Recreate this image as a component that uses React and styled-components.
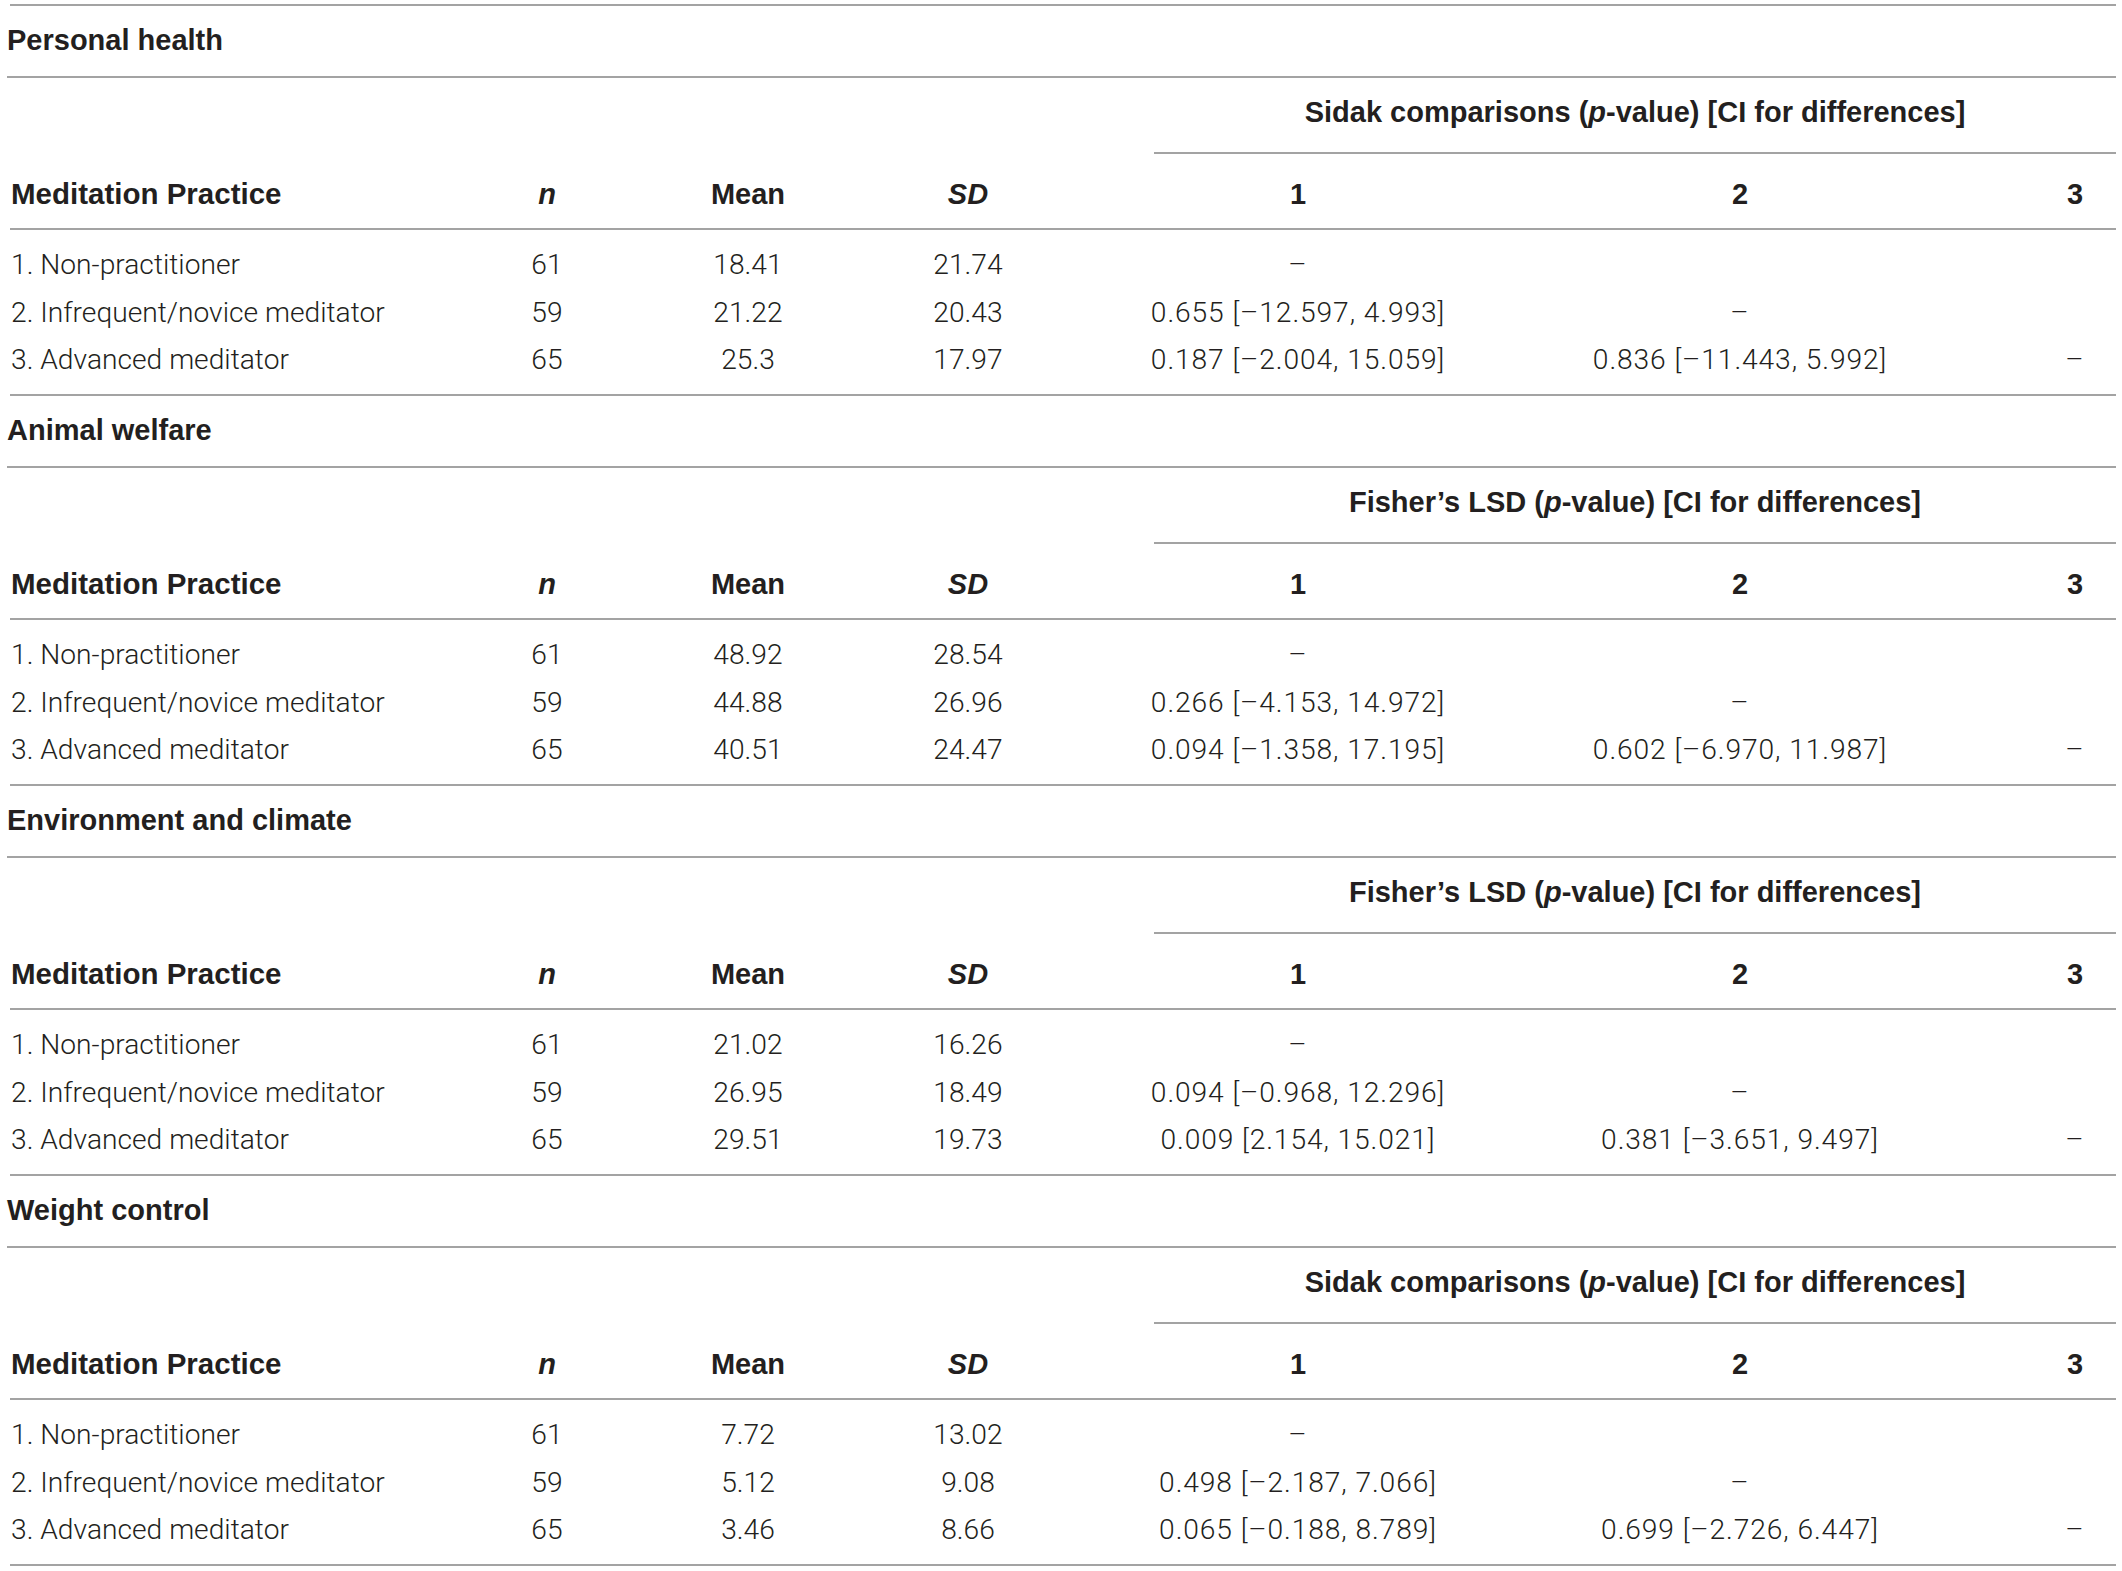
import React from 'react';
import styled, { createGlobalStyle } from 'styled-components';

const LINE = '#a3a3a3';
const INK = '#231f20';
const COLUMNS = '437px 200px 202px 238px 63px 296px 588px 82px';

const SECTIONS = [
    {
        title: 'Personal health',
        test: 'Sidak comparisons',
        rows: [
            ['1. Non-practitioner', '61', '18.41', '21.74', '–', '', ''],
            ['2. Infrequent/novice meditator', '59', '21.22', '20.43', '0.655 [–12.597, 4.993]', '–', ''],
            ['3. Advanced meditator', '65', '25.3', '17.97', '0.187 [–2.004, 15.059]', '0.836 [–11.443, 5.992]', '–'],
        ],
    },
    {
        title: 'Animal welfare',
        test: 'Fisher’s LSD',
        rows: [
            ['1. Non-practitioner', '61', '48.92', '28.54', '–', '', ''],
            ['2. Infrequent/novice meditator', '59', '44.88', '26.96', '0.266 [–4.153, 14.972]', '–', ''],
            ['3. Advanced meditator', '65', '40.51', '24.47', '0.094 [–1.358, 17.195]', '0.602 [–6.970, 11.987]', '–'],
        ],
    },
    {
        title: 'Environment and climate',
        test: 'Fisher’s LSD',
        rows: [
            ['1. Non-practitioner', '61', '21.02', '16.26', '–', '', ''],
            ['2. Infrequent/novice meditator', '59', '26.95', '18.49', '0.094 [–0.968, 12.296]', '–', ''],
            ['3. Advanced meditator', '65', '29.51', '19.73', '0.009 [2.154, 15.021]', '0.381 [–3.651, 9.497]', '–'],
        ],
    },
    {
        title: 'Weight control',
        test: 'Sidak comparisons',
        rows: [
            ['1. Non-practitioner', '61', '7.72', '13.02', '–', '', ''],
            ['2. Infrequent/novice meditator', '59', '5.12', '9.08', '0.498 [–2.187, 7.066]', '–', ''],
            ['3. Advanced meditator', '65', '3.46', '8.66', '0.065 [–0.188, 8.789]', '0.699 [–2.726, 6.447]', '–'],
        ],
    },
];

const GlobalStyle = createGlobalStyle`
    html, body {
        margin: 0;
        background: #ffffff;
    }
`;

const Page = styled.div`
    padding: 4px 0 0 10px;
    font-family: 'Roboto', 'Liberation Sans', sans-serif;
    color: ${INK};
`;

const Table = styled.div`
    width: 2106px;
    border-bottom: 2px solid ${LINE};
`;

const Section = styled.section`
    border-top: 2px solid ${LINE};
`;

const Title = styled.div`
    height: 69.7px;
    display: flex;
    align-items: center;
    margin-left: -3px;
    border-bottom: 2px solid ${LINE};
    font-family: 'Liberation Sans', Arial, sans-serif;
    font-weight: 700;
    font-size: 29px;
`;

const Grid = styled.div`
    display: grid;
    grid-template-columns: ${COLUMNS};
`;

const HeadRow = styled(Grid)`
    border-bottom: 2px solid ${LINE};
`;

const Bold = styled.div`
    font-family: 'Liberation Sans', Arial, sans-serif;
    font-weight: 700;
    font-size: 29px;
    line-height: 40px;
    white-space: nowrap;
`;

const GroupHead = styled(Bold)`
    grid-column: 6 / 9;
    margin-left: 4px;
    padding: 14px 0 20.6px;
    text-align: center;
    border-bottom: 2px solid ${LINE};
`;

const HeadCell = styled(Bold)`
    padding: 19.4px 0 14.3px;
    text-align: ${({ $left }) => ($left ? 'left' : 'center')};
    padding-left: ${({ $left }) => ($left ? '1px' : '0')};
    font-size: ${({ $left }) => ($left ? '29.5px' : '29px')};
    grid-column: ${({ $col }) => $col || 'auto'};
`;

const Body = styled.div`
    padding: 11.4px 0 10.1px;
`;

const Cell = styled.div`
    font-size: 28.2px;
    font-weight: 300;
    line-height: 47.5px;
    white-space: nowrap;
    text-align: ${({ $left }) => ($left ? 'left' : 'center')};
    padding-left: ${({ $left }) => ($left ? '1px' : '0')};
    letter-spacing: ${({ $wide }) => ($wide ? '0.9px' : '0')};
    grid-column: ${({ $col }) => $col || 'auto'};
`;

const Em = styled.em`
    font-style: italic;
`;

const TableSection = ({ section }) => (
    <Section>
        <Title>{section.title}</Title>
        <Grid>
            <GroupHead>
                {section.test} (<Em>p</Em>-value) [CI for differences]
            </GroupHead>
        </Grid>
        <HeadRow>
            <HeadCell $left>Meditation Practice</HeadCell>
            <HeadCell>
                <Em>n</Em>
            </HeadCell>
            <HeadCell>Mean</HeadCell>
            <HeadCell>
                <Em>SD</Em>
            </HeadCell>
            <HeadCell $col={6}>1</HeadCell>
            <HeadCell>2</HeadCell>
            <HeadCell>3</HeadCell>
        </HeadRow>
        <Body>
            {section.rows.map((row) => (
                <Grid key={row[0]}>
                    <Cell $left>{row[0]}</Cell>
                    <Cell>{row[1]}</Cell>
                    <Cell>{row[2]}</Cell>
                    <Cell>{row[3]}</Cell>
                    <Cell $col={6} $wide>
                        {row[4]}
                    </Cell>
                    <Cell $wide>{row[5]}</Cell>
                    <Cell $wide>{row[6]}</Cell>
                </Grid>
            ))}
        </Body>
    </Section>
);

const App = () => (
    <>
        <GlobalStyle />
        <Page>
            <Table>
                {SECTIONS.map((section) => (
                    <TableSection key={section.title} section={section} />
                ))}
            </Table>
        </Page>
    </>
);

export default App;
